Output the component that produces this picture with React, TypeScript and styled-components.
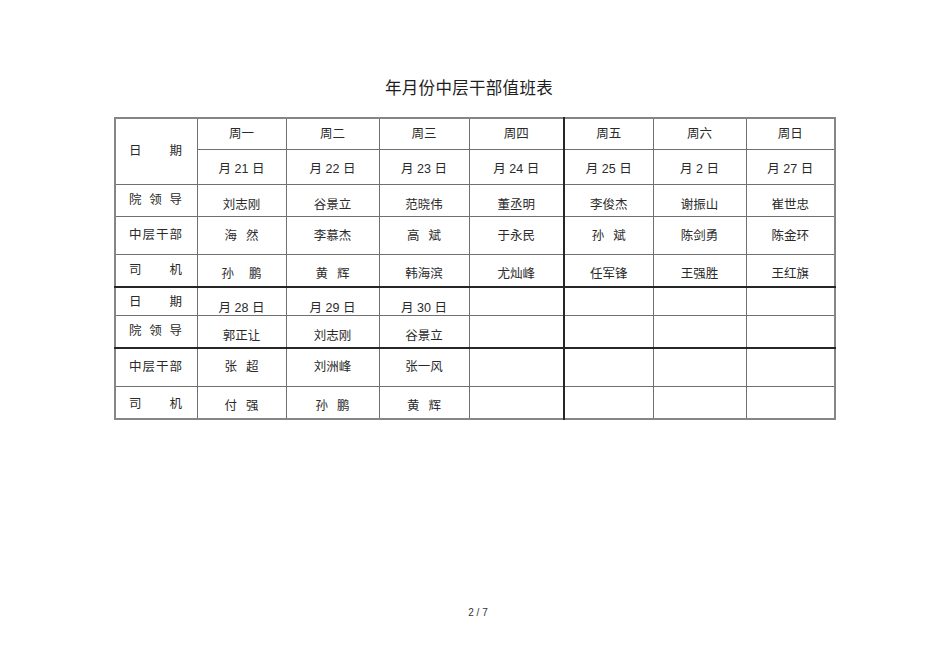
import React from "react";
import styled, { createGlobalStyle } from "styled-components";

const GlobalStyle = createGlobalStyle`
  html, body {
    margin: 0;
    padding: 0;
    background: #ffffff;
  }
  body {
    font-family: "Liberation Sans", "Noto Sans CJK SC", sans-serif;
    color: #2a2a2a;
  }
`;

const Page = styled.div`
  width: 950px;
  height: 672px;
  box-sizing: border-box;
  padding-top: 78px;
  display: flex;
  flex-direction: column;
  align-items: center;
`;

const Title = styled.h1`
  margin: 0 12px 0 0;
  font-size: 16.5px;
  line-height: 20px;
  font-weight: normal;
  letter-spacing: 0.3px;
  color: #1e1e1e;
`;

const Sheet = styled.table`
  margin-top: 19px;
  width: 720px;
  table-layout: fixed;
  border-collapse: collapse;
  border: 2px solid #858585;
  font-size: 12.5px;
  line-height: 14px;
`;

const Col = styled.col<{ $w: number }>`
  width: ${(p) => p.$w}px;
`;

const Row = styled.tr<{ $h: number }>`
  height: ${(p) => p.$h}px;
`;

const Cell = styled.td<{ $thickLeft?: boolean; $thickTop?: boolean; $pad?: number }>`
  border: 1px solid #707070;
  border-left: ${(p) => (p.$thickLeft ? "2px solid #262626" : "1px solid #707070")};
  border-top: ${(p) => (p.$thickTop ? "2px solid #262626" : "1px solid #707070")};
  padding: ${(p) => p.$pad ?? 0}px 0 0;
  text-align: center;
  vertical-align: middle;
  white-space: nowrap;
`;

const LabelCell = styled(Cell)`
  text-align: left;
  padding-left: 13px;
`;

const Label = styled.span`
  display: inline-block;
  width: 53px;
  text-align: justify;
  text-align-last: justify;
`;

const Pair = styled.span<{ $gap: number }>`
  display: inline-flex;
  gap: ${(p) => p.$gap}px;
`;

const PageNo = styled.div`
  margin-top: 186px;
  font-size: 10px;
  line-height: 14px;
  color: #333;
  padding-left: 6px;
`;

const colWidths = [82, 89, 93, 90, 95, 89, 93, 89];
const weekdays = ["周一", "周二", "周三", "周四", "周五", "周六", "周日"];
const firstDates = ["21", "22", "23", "24", "25", "2", "27"];

type Line = {
  label: string;
  h: number;
  pad: number;
  labelPad?: number;
  thickTop?: boolean;
  cells: string[];
};

const lines: Line[] = [
  { label: "院 领 导", h: 32, pad: 10, cells: ["刘志刚", "谷景立", "范晓伟", "董丞明", "李俊杰", "谢振山", "崔世忠"] },
  { label: "中层干部", h: 38, pad: 2, cells: ["海 然", "李慕杰", "高 斌", "于永民", "孙 斌", "陈剑勇", "陈金环"] },
  { label: "司 机", h: 33, pad: 7, cells: ["孙  鹏", "黄 辉", "韩海滨", "尤灿峰", "任军锋", "王强胜", "王红旗"] },
  { label: "日 期", h: 28, pad: 13, thickTop: true, cells: ["月 28 日", "月 29 日", "月 30 日", "", "", "", ""] },
  { label: "院 领 导", h: 32, pad: 10, cells: ["郭正让", "刘志刚", "谷景立", "", "", "", ""] },
  { label: "中层干部", h: 39, pad: 0, thickTop: true, cells: ["张 超", "刘洲峰", "张一风", "", "", "", ""] },
  { label: "司 机", h: 32, pad: 8, labelPad: 4, cells: ["付 强", "孙 鹏", "黄 辉", "", "", "", ""] },
];

// two-character names are spread apart, dates keep their plain spaces
function Name({ text }: { text: string }) {
  if (text.startsWith("月") || !text.includes(" ")) return <>{text}</>;
  const parts = text.split(/\s+/);
  return (
    <Pair $gap={text.includes("  ") ? 15 : 9}>
      {parts.map((c) => (
        <span key={c}>{c}</span>
      ))}
    </Pair>
  );
}

function LabelText({ text }: { text: string }) {
  return <Label>{text.replace(/\s+/g, "")}</Label>;
}

export default function App() {
  return (
    <>
      <GlobalStyle />
      <Page>
        <Title>年月份中层干部值班表</Title>
        <Sheet>
          <colgroup>
            {colWidths.map((w, i) => (
              <Col key={i} $w={w} />
            ))}
          </colgroup>
          <tbody>
            <Row $h={31}>
              <LabelCell rowSpan={2}>
                <LabelText text="日 期" />
              </LabelCell>
              {weekdays.map((d, i) => (
                <Cell key={d} $thickLeft={i === 4}>
                  {d}
                </Cell>
              ))}
            </Row>
            <Row $h={35}>
              {firstDates.map((n, i) => (
                <Cell key={n} $thickLeft={i === 4} $pad={5}>
                  月 {n} 日
                </Cell>
              ))}
            </Row>
            {lines.map((line, r) => (
              <Row key={r} $h={line.h}>
                <LabelCell $thickTop={line.thickTop} $pad={line.labelPad}>
                  <LabelText text={line.label} />
                </LabelCell>
                {line.cells.map((c, i) => (
                  <Cell key={i} $thickLeft={i === 4} $thickTop={line.thickTop} $pad={line.pad}>
                    <Name text={c} />
                  </Cell>
                ))}
              </Row>
            ))}
          </tbody>
        </Sheet>
        <PageNo>2 / 7</PageNo>
      </Page>
    </>
  );
}
